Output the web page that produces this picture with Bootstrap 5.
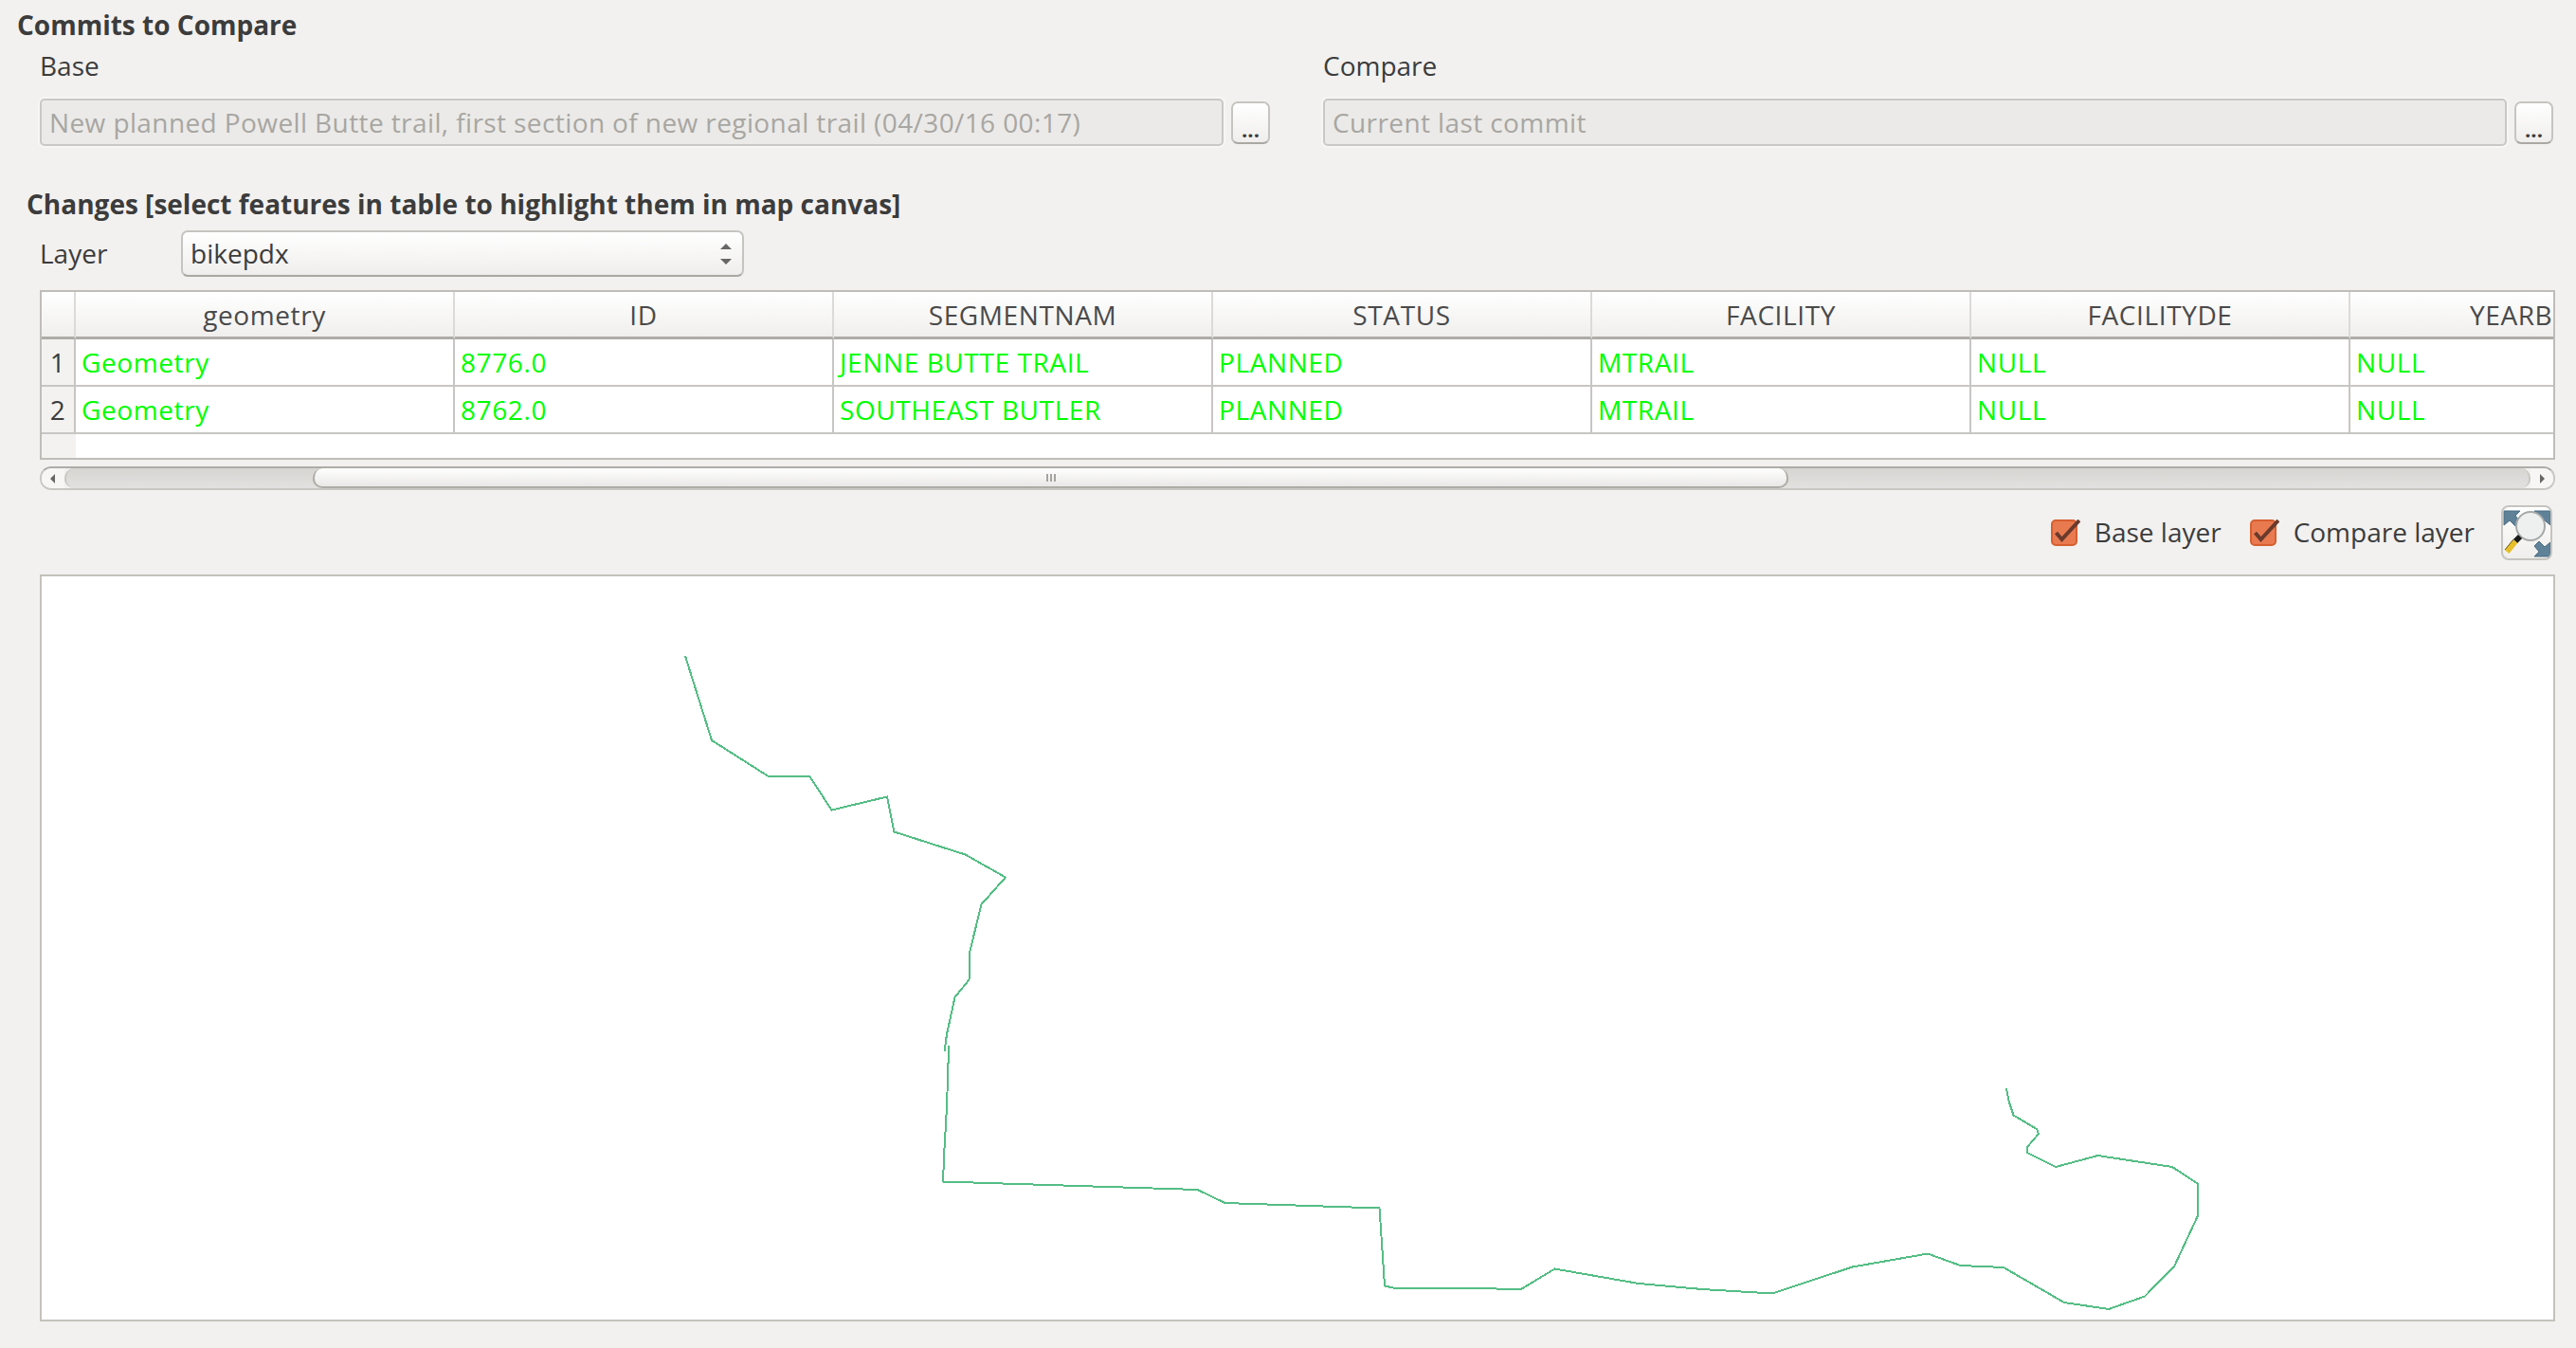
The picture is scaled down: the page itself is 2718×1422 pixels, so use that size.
<!DOCTYPE html>
<html lang="en">
<head>
    <meta charset="UTF-8">
    <meta name="viewport" content="width=device-width, initial-scale=1.0">
    <title>Commits to Compare</title>
    <link href="https://cdn.jsdelivr.net/npm/bootstrap@5.3.0/dist/css/bootstrap.min.css" rel="stylesheet">
    <style>
        body {
            background: #f2f1f0;
            color: #3c3c3c;
            font-family: "Open Sans", "Noto Sans", sans-serif;
            font-size: 28px;
            height: 1422px;
            overflow: hidden;
        }
        .group-title { font-weight: 700; line-height: 30px; }
        .title-commits { margin: 0 0 0 18px; padding-top: 11px; height: 41px; }
        .title-changes { margin: 0 0 12px 28px; height: 30px; line-height: 28px; }
        .pane { padding: 0 22px 0 42px; }
        .commit-row { gap: 56px; height: 113px; margin: 0 2px 47px 0; padding-top: 13px; }
        .commit-col { flex: 1 1 0; min-width: 0; }
        .commit-fields { gap: 8px; }
        .field-label { line-height: 30px; height: 50px; }
        .commit-input.form-control {
            height: 50px;
            padding: 0 8px;
            font-size: 28px;
            letter-spacing: 0.4px;
            color: #a8a6a2;
            background: #ebeae8;
            border: 2px solid #cac8c4;
            border-radius: 5px;
            box-shadow: 0 0 0 2px #f7f6f5;
            opacity: 1;
        }
        .dots-btn.btn {
            flex: 0 0 41px;
            height: 45px;
            margin: 3px 0 0;
            padding: 0 0 3px;
            font-size: 22px;
            font-weight: 700;
            line-height: 1;
            color: #3c3c3c;
            background: linear-gradient(#ffffff, #efeeec);
            border: 2px solid #c6c4bf;
            border-bottom-color: #aaa8a3;
            border-radius: 7px;
        }
        .layer-row { height: 49px; margin-bottom: 14px; }
        .layer-label { width: 149px; padding-bottom: 2px; }
        .layer-select.form-select {
            width: 594px;
            height: 49px;
            padding: 0 30px 2px 8px;
            font-size: 28px;
            color: #3c3c3c;
            border: 2px solid #c6c4bf;
            border-bottom-color: #a9a7a2;
            border-radius: 7px;
            background-color: #f6f5f4;
            background-image: url("data:image/svg+xml,%3Csvg xmlns='http://www.w3.org/2000/svg' width='14' height='24'%3E%3Cpath d='M7 1l6 6H1zM7 23l6-6H1z' fill='%23666'/%3E%3C/svg%3E"), linear-gradient(#ffffff, #efeeec);
            background-repeat: no-repeat;
            background-position: right 10px center, 0 0;
            background-size: 14px 24px, 100% 100%;
        }
        .table-wrap {
            height: 179px;
            overflow: hidden;
            background: #fff;
            border: 2px solid #c0bdb8;
            margin-bottom: 7px;
        }
        .diff-table {
            table-layout: fixed;
            width: 2836px;
            margin: 0;
            border-collapse: separate;
            border-spacing: 0;
            font-size: 28px;
            letter-spacing: 0.6px;
        }
        .diff-table th, .diff-table td {
            padding: 0 0 0 6px;
            font-weight: 400;
            vertical-align: middle;
            white-space: nowrap;
            background: transparent;
            box-shadow: none;
            border: 0;
            border-right: 2px solid #c8c6c3;
            border-bottom: 2px solid #c8c6c3;
        }
        .diff-table thead th {
            height: 50px;
            padding: 0;
            text-align: center;
            color: #4a4a4a;
            background: linear-gradient(#ffffff, #f0efed);
            border-right-color: #dcdad7;
            border-bottom: 3px solid #aeaca7;
        }
        .diff-table tbody td { height: 50px; color: #00ff00; }
        .diff-table tbody th {
            padding: 0;
            text-align: center;
            color: #3c3c3c;
            background: #f3f2f1;
        }
        .diff-table .num-col { width: 36px; }
        .diff-table .data-col { width: 400px; }
        .diff-table thead th.cut-col { text-align: left; padding-left: 126px; }
        .diff-table tr.filler th, .diff-table tr.filler td { height: 25px; border: 0; }
        .hscroll {
            height: 25px;
            margin-bottom: 16px;
            border: 2px solid #c9c7c2;
            border-top-color: #aeaca7;
            border-radius: 12px;
            overflow: hidden;
        }
        .hscroll-cap { flex: 0 0 24px; background: #f7f6f5; }
        .hscroll-trough {
            flex: 1 1 0;
            background: linear-gradient(#d6d5d2, #e2e1df);
            border: solid #c9c7c2;
            border-width: 0 2px;
            border-radius: 10px;
        }
        .hscroll-thumb {
            width: 1557px;
            margin-left: 260px;
            background: linear-gradient(#ffffff, #e9e8e6);
            border: 2px solid #aeaca7;
            border-width: 0 2px 2px 2px;
            border-radius: 10px;
        }
        .view-row { height: 58px; margin-bottom: 15px; padding-right: 3px; }
        .layer-check { gap: 15px; line-height: 30px; }
        .layer-check span { padding-bottom: 2px; }
        .layer-check .form-check-input[type=checkbox]:checked {
            width: 31px;
            height: 28px;
            margin: 0;
            float: none;
            border: 0;
            border-radius: 0;
            background-color: transparent;
            background-image: url("data:image/svg+xml,%3Csvg xmlns='http://www.w3.org/2000/svg' viewBox='0 0 31 28'%3E%3Crect x='1' y='1' width='26' height='26' rx='4' fill='%23e97a50' stroke='%23d65f30' stroke-width='2'/%3E%3Cpath d='M5.500 14l6 7L30 1' fill='none' stroke='%236b3a2c' stroke-width='4'/%3E%3C/svg%3E");
            background-size: 100% 100%;
        }
        .layer-check.first-check { margin: 0 30px 0 0; }
        .layer-check.last-check { margin: 0 28px 0 0; }
        .zoom-btn.btn {
            width: 54px;
            height: 58px;
            padding: 0;
            background: linear-gradient(#ffffff, #efeeec);
            border: 2px solid #c6c4bf;
            border-radius: 8px;
            overflow: hidden;
        }
        .map-canvas {
            height: 788px;
            background: #fff;
            border: 2px solid #c4c2ba;
        }
    </style>
</head>
<body class="m-0">
    <div class="group-title title-commits">Commits to Compare</div>
    <div class="pane">
        <div class="d-flex commit-row">
            <div class="commit-col">
                <div class="field-label">Base</div>
                <div class="d-flex commit-fields">
                    <input type="text" class="form-control commit-input" disabled value="New planned Powell Butte trail, first section of new regional trail (04/30/16 00:17)">
                    <button type="button" class="btn dots-btn d-flex align-items-end justify-content-center">...</button>
                </div>
            </div>
            <div class="commit-col">
                <div class="field-label">Compare</div>
                <div class="d-flex commit-fields">
                    <input type="text" class="form-control commit-input" disabled value="Current last commit">
                    <button type="button" class="btn dots-btn d-flex align-items-end justify-content-center">...</button>
                </div>
            </div>
        </div>
    </div>
    <div class="group-title title-changes">Changes [select features in table to highlight them in map canvas]</div>
    <div class="pane">
        <div class="d-flex align-items-center layer-row">
            <div class="layer-label">Layer</div>
            <select class="form-select layer-select"><option>bikepdx</option></select>
        </div>
        <div class="table-wrap">
            <table class="table diff-table">
                <colgroup>
                    <col class="num-col">
                    <col class="data-col"><col class="data-col"><col class="data-col"><col class="data-col">
                    <col class="data-col"><col class="data-col"><col class="data-col">
                </colgroup>
                <thead>
                    <tr>
                        <th></th><th>geometry</th><th>ID</th><th>SEGMENTNAM</th><th>STATUS</th><th>FACILITY</th><th>FACILITYDE</th><th class="cut-col">YEARB</th>
                    </tr>
                </thead>
                <tbody>
                    <tr>
                        <th>1</th><td>Geometry</td><td>8776.0</td><td>JENNE BUTTE TRAIL</td><td>PLANNED</td><td>MTRAIL</td><td>NULL</td><td>NULL</td>
                    </tr>
                    <tr>
                        <th>2</th><td>Geometry</td><td>8762.0</td><td>SOUTHEAST BUTLER</td><td>PLANNED</td><td>MTRAIL</td><td>NULL</td><td>NULL</td>
                    </tr>
                    <tr class="filler"><th></th><td colspan="7"></td></tr>
                </tbody>
            </table>
        </div>
        <div class="d-flex hscroll">
            <div class="hscroll-cap d-flex align-items-center justify-content-center">
                <svg width="6" height="10" viewBox="0 0 6 10"><path d="M5 0v10L0 5z" fill="#666"/></svg>
            </div>
            <div class="hscroll-trough d-flex">
                <div class="hscroll-thumb d-flex align-items-center justify-content-center">
                    <svg width="12" height="8" viewBox="0 0 12 8"><path d="M1 0h2v8H1zM5 0h2v8H5zM9 0h2v8H9z" fill="#a5a39e"/></svg>
                </div>
            </div>
            <div class="hscroll-cap d-flex align-items-center justify-content-center">
                <svg width="6" height="10" viewBox="0 0 6 10"><path d="M1 0v10l5-5z" fill="#666"/></svg>
            </div>
        </div>
        <div class="d-flex align-items-center justify-content-end view-row">
            <label class="form-check d-flex align-items-center p-0 layer-check first-check">
                <input class="form-check-input" type="checkbox" checked>
                <span>Base layer</span>
            </label>
            <label class="form-check d-flex align-items-center p-0 layer-check last-check">
                <input class="form-check-input" type="checkbox" checked>
                <span>Compare layer</span>
            </label>
            <button type="button" class="btn zoom-btn d-flex">
                <svg width="50" height="54" viewBox="2 2 50 54">
                    <g fill="#5f8298" stroke="#4a6d84" stroke-width="1">
                        <path d="M3 6H20L15 11l5 6-5 5-6-6-6 5z"/>
                        <path d="M52 6H35l5 5-5 6 5 5 6-6 6 5z"/>
                        <path d="M52 54H35l5-5-5-6 5-5 6 6 6-5z"/>
                    </g>
                    <circle cx="31" cy="22" r="15" fill="#eef0f0" stroke="#a5a8a8" stroke-width="2"/>
                    <path d="M20 33l-5 5" stroke="#1b1b1b" stroke-width="6"/>
                    <path d="M15 38L6 49" stroke="#e7bf2b" stroke-width="6"/>
                    <path d="M13 36L4 47" stroke="#6c5a1f" stroke-width="1" fill="none"/>
                </svg>
            </button>
        </div>
        <div class="map-canvas">
            <svg class="d-block w-100 h-100" viewBox="44 608 2650 784" shape-rendering="crispEdges">
                <g fill="none" stroke="#54bd84" stroke-width="2">
                    <polyline points="723,692 751,781 810,818.5 854,818.5 877.5,854.5 936,840.5 943.5,877.5 1018.5,901.5 1061,925.5 1035.5,954 1023.5,1003 1022.5,1033.5 1007.5,1052 999,1091 996.5,1109"/>
                    <polyline points="1000.5,1103 1000.5,1121.5 999,1167.5 996.5,1211.5 995,1246.5 1263.5,1255 1292.5,1269 1455.5,1274.5 1461,1356.5 1470,1358.5 1554,1358.5 1604,1360.5 1640.5,1338.5 1729,1354 1796,1360 1870,1364.5 1954.5,1336.5 2034,1322.5 2068.5,1335 2114,1337 2178,1374 2225,1381 2263,1367.5 2294,1336 2318.5,1283.5 2318.5,1248.5 2292,1231 2213.5,1219 2169,1231 2139,1216 2139,1210 2151,1196 2149,1191 2124.5,1176.5 2120,1163 2117,1148"/>
                </g>
            </svg>
        </div>
    </div>
    <script src="https://cdn.jsdelivr.net/npm/bootstrap@5.3.0/dist/js/bootstrap.bundle.min.js"></script>
</body>
</html>
